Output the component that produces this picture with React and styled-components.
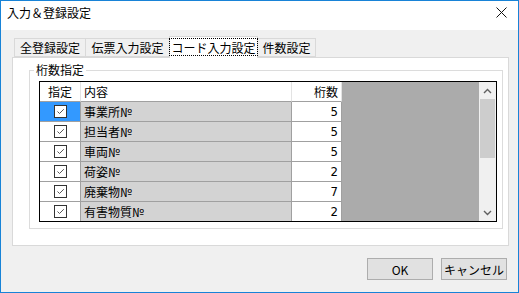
import React from "react";
import styled, { createGlobalStyle } from "styled-components";

const Global = createGlobalStyle`
  html, body { margin: 0; padding: 0; background: #fff; overflow: hidden; }
  * { box-sizing: border-box; }
`;

const FONT = `"Noto Sans CJK JP", "Noto Sans", sans-serif`;

const Window = styled.div`
  width: 519px;
  height: 293px;
  border: 1px solid #1883d7;
  display: flex;
  flex-direction: column;
  font-family: ${FONT};
  font-size: 12px;
  color: #000;
  background: #f0f0f0;
`;

const TitleBar = styled.div`
  height: 29px;
  background: #fff;
  display: flex;
  align-items: flex-start;
  justify-content: space-between;
  padding: 4px 10px 0 6px;
  line-height: 16px;
`;

const CloseBtn = styled.div`
  width: 12px;
  height: 12px;
  margin-top: 2px;
  display: flex;
`;

const Client = styled.div`
  flex: 1;
  display: flex;
  flex-direction: column;
  padding: 6px 9px 0 11px;
`;

const TabStrip = styled.div`
  display: flex;
  align-items: flex-end;
  height: 21px;
  padding-left: 2px;
  position: relative;
  z-index: 1;
`;

const Tab = styled.div`
  width: ${(p) => p.w}px;
  height: ${(p) => (p.active ? 22 : 19)}px;
  margin-bottom: ${(p) => (p.active ? -1 : 0)}px;
  margin-left: ${(p) => (p.first ? 0 : -1)}px;
  background: ${(p) => (p.active ? "#fff" : "#f0f0f0")};
  border: 1px solid #d9d9d9;
  border-bottom: ${(p) => (p.active ? "none" : "1px solid #d9d9d9")};
  display: flex;
  align-items: center;
  justify-content: center;
  line-height: 15px;
  padding-bottom: ${(p) => (p.active ? 2 : 0)}px;
  position: relative;
  z-index: ${(p) => (p.active ? 2 : 0)};
`;

const FocusText = styled.span`
  outline: 1px dotted #000;
  outline-offset: 0;
  padding: 1px 1px 0 1px;
  line-height: 15px;
`;

const Panel = styled.div`
  background: #fff;
  border: 1px solid #d9d9d9;
  padding: 5px 5px 16px 16px;
`;

const Group = styled.fieldset`
  margin: 0;
  padding: 0;
  border: 1px solid #dcdcdc;
  min-width: 0;
`;

const Legend = styled.legend`
  margin-left: 4px;
  padding: 0 2px;
  line-height: 14px;
  height: 14px;
`;

const Grid = styled.div`
  margin: 4px 5px 6px 9px;
  height: 141px;
  border: 1px solid #000;
  display: flex;
  overflow: hidden;
`;

const DataArea = styled.div`
  flex: 1;
  background: #ababab;
  overflow: hidden;
`;

const Row = styled.div`
  display: grid;
  grid-template-columns: 41px 211px 50px;
  width: 302px;
  height: 20px;
`;

const Cell = styled.div`
  border-right: 1px solid #a0a0a0;
  border-bottom: 1px solid #a0a0a0;
  background: ${(p) => p.bg};
  display: flex;
  align-items: center;
  justify-content: ${(p) => p.align || "flex-start"};
  padding: 0 ${(p) => (p.align === "flex-end" ? 3 : 0)}px 0 ${(p) => (p.align === "flex-start" ? 3 : 0)}px;
  line-height: 15px;
  white-space: nowrap;
`;

const HeadCell = styled(Cell)`
  border-right-color: #e3e3e3;
  border-bottom-color: #a0a0a0;
`;

const Digit = styled.span`
  font-family: "Liberation Sans Narrow", "DejaVu Sans Condensed", ${FONT};
  font-size: 13px;
`;

const Box = styled.div`
  width: 13px;
  height: 13px;
  border: 1px solid #333;
  background: #fff;
  display: flex;
`;

const ScrollBar = styled.div`
  width: 17px;
  background: #f0f0f0;
  display: flex;
  flex-direction: column;
`;

const Arrow = styled.div`
  height: 17px;
  display: flex;
  align-items: center;
  justify-content: center;
`;

const Thumb = styled.div`
  height: 59px;
  margin: 0 1px;
  background: #cdcdcd;
`;

const Track = styled.div`
  flex: 1;
`;

const Footer = styled.div`
  display: flex;
  justify-content: flex-end;
  gap: 8px;
  padding: 12px 2px 0 0;
`;

const Button = styled.div`
  width: 66px;
  height: 22px;
  background: #e1e1e1;
  border: 1px solid #adadad;
  display: flex;
  align-items: center;
  justify-content: center;
  line-height: 15px;
`;

const Check = () => (
  <Box>
    <svg width="11" height="11" viewBox="0 0 11 11">
      <path d="M2.5 5.5 L4.5 7.5 L8.8 3.2" fill="none" stroke="#555" strokeWidth="1" />
    </svg>
  </Box>
);

const rows = [
  ["事業所№", "5"],
  ["担当者№", "5"],
  ["車両№", "5"],
  ["荷姿№", "2"],
  ["廃棄物№", "7"],
  ["有害物質№", "2"],
];

export default function App() {
  return (
    <>
      <Global />
      <Window>
        <TitleBar>
          <span>入力＆登録設定</span>
          <CloseBtn>
            <svg width="11" height="11" viewBox="0 0 11 11">
              <path d="M0.5 0.5 L10.5 10.5 M10.5 0.5 L0.5 10.5" stroke="#111" strokeWidth="1" />
            </svg>
          </CloseBtn>
        </TitleBar>
        <Client>
          <TabStrip>
            <Tab w={72} first>全登録設定</Tab>
            <Tab w={85}>伝票入力設定</Tab>
            <Tab w={89} active>
              <FocusText>コード入力設定</FocusText>
            </Tab>
            <Tab w={59}>件数設定</Tab>
          </TabStrip>
          <Panel>
            <Group>
              <Legend>桁数指定</Legend>
              <Grid>
                <DataArea>
                  <Row>
                    <HeadCell bg="#fff" align="center">指定</HeadCell>
                    <HeadCell bg="#fff" align="flex-start">内容</HeadCell>
                    <HeadCell bg="#fff" align="flex-end">桁数</HeadCell>
                  </Row>
                  {rows.map(([name, n], i) => (
                    <Row key={name}>
                      <Cell bg={i === 0 ? "#3399ff" : "#fff"} align="center">
                        <Check />
                      </Cell>
                      <Cell bg="#d3d3d3" align="flex-start">{name}</Cell>
                      <Cell bg="#fff" align="flex-end">
                        <Digit>{n}</Digit>
                      </Cell>
                    </Row>
                  ))}
                </DataArea>
                <ScrollBar>
                  <Arrow>
                    <svg width="9" height="6" viewBox="0 0 9 6">
                      <path d="M1 5 L4.5 1.5 L8 5" fill="none" stroke="#606060" strokeWidth="1.4" />
                    </svg>
                  </Arrow>
                  <Thumb />
                  <Track />
                  <Arrow>
                    <svg width="9" height="6" viewBox="0 0 9 6">
                      <path d="M1 1 L4.5 4.5 L8 1" fill="none" stroke="#606060" strokeWidth="1.4" />
                    </svg>
                  </Arrow>
                </ScrollBar>
              </Grid>
            </Group>
          </Panel>
          <Footer>
            <Button>OK</Button>
            <Button>キャンセル</Button>
          </Footer>
        </Client>
      </Window>
    </>
  );
}
